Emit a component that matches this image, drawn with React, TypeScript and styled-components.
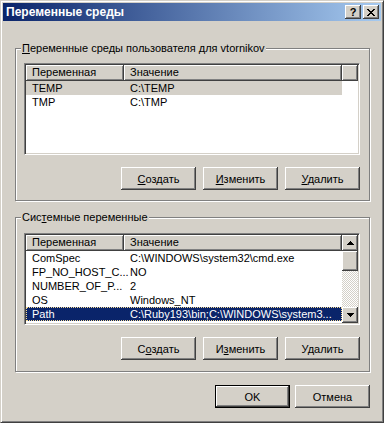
import styled, { createGlobalStyle, css } from "styled-components";

type Row = { name: string; value: string };

const GlobalStyle = createGlobalStyle`
  html, body {
    margin: 0;
    padding: 0;
    background: #d4d0c8;
  }
`;

const raised = css`
  box-shadow: inset -1px -1px #404040, inset 1px 1px #fff,
    inset -2px -2px #808080, inset 2px 2px #d4d0c8;
`;

const Window = styled.div`
  box-sizing: border-box;
  width: 384px;
  height: 423px;
  padding: 2px;
  background: #d4d0c8;
  border: 1px solid;
  border-color: #d4d0c8 #404040 #404040 #d4d0c8;
  box-shadow: inset 1px 1px #fff, inset -1px -1px #808080;
  display: flex;
  flex-direction: column;
  font-family: "Liberation Sans", Arial, sans-serif;
  font-size: 11px;
  color: #000;
`;

const TitleBar = styled.div`
  flex: none;
  height: 18px;
  display: flex;
  align-items: center;
  padding: 0 2px 0 3px;
  background: linear-gradient(to right, #0a246a, #a6caf0);
  color: #fff;
`;

const Title = styled.div`
  flex: 1;
  font-weight: bold;
  font-size: 12px;
`;

const CaptionButton = styled.div<{ $gap?: number }>`
  width: 16px;
  height: 14px;
  margin-left: ${(p) => p.$gap ?? 0}px;
  background: #d4d0c8;
  ${raised}
  display: flex;
  align-items: center;
  justify-content: center;
  color: #000;
  font-weight: bold;
  font-size: 11px;
  line-height: 14px;
`;

const Client = styled.div`
  flex: 1;
  display: flex;
  flex-direction: column;
  padding: 21px 11px 0 12px;
`;

const Group = styled.fieldset<{ $top?: number }>`
  margin: ${(p) => p.$top ?? 0}px 0 0 0;
  padding: 0;
  min-width: 0;
  border: 1px solid #808080;
  box-shadow: inset 1px 1px #fff, 1px 1px #fff;
`;

const Legend = styled.legend`
  margin-left: 5px;
  padding: 0 1px;
  line-height: 13px;
  background: #d4d0c8;
`;

const GroupBody = styled.div<{ $pt: number; $pb: number }>`
  display: flex;
  flex-direction: column;
  padding: ${(p) => p.$pt}px 9px ${(p) => p.$pb}px 8px;
`;

const ListView = styled.div`
  box-sizing: border-box;
  height: 92px;
  padding: 1px;
  display: flex;
  background: #fff;
  border: 1px solid;
  border-color: #808080 #fff #fff #808080;
  box-shadow: inset 1px 1px #404040, inset -1px -1px #d4d0c8;
`;

const Columns = styled.div`
  flex: 1;
  display: flex;
  flex-direction: column;
  overflow: hidden;
`;

const Header = styled.div`
  display: flex;
  flex: none;
  height: 16px;
`;

const HeaderCell = styled.div<{ $w?: number }>`
  box-sizing: border-box;
  ${(p) => (p.$w ? `width: ${p.$w}px; flex: none;` : "flex: 1;")}
  height: 16px;
  padding-left: 6px;
  line-height: 15px;
  background: #d4d0c8;
  ${raised}
`;

const ItemRow = styled.div<{ $sel?: "gray" | "blue" }>`
  display: flex;
  width: 316px;
  height: 14px;
  line-height: 14px;
  background: ${(p) =>
    p.$sel === "gray" ? "#d4d0c8" : p.$sel === "blue" ? "#0a246a" : "transparent"};
  color: ${(p) => (p.$sel === "blue" ? "#fff" : "#000")};
  ${(p) =>
    p.$sel === "blue" &&
    css`
      outline: 1px dotted #f5db95;
      outline-offset: -1px;
    `}
`;

const Cell = styled.div<{ $w: number }>`
  box-sizing: border-box;
  flex: none;
  width: ${(p) => p.$w}px;
  padding-left: 6px;
  white-space: nowrap;
`;

const ScrollBar = styled.div`
  flex: none;
  width: 16px;
  display: flex;
  flex-direction: column;
  background: repeating-conic-gradient(#d4d0c8 0 25%, #fff 0 50%) 0 0 / 2px 2px;
`;

const ScrollButton = styled.div`
  flex: none;
  width: 16px;
  height: 16px;
  background: #d4d0c8;
  ${raised}
  display: flex;
  align-items: center;
  justify-content: center;
`;

const Thumb = styled.div`
  flex: none;
  width: 16px;
  height: 20px;
  background: #d4d0c8;
  ${raised}
`;

const Track = styled.div`
  flex: 1;
`;

const ButtonRow = styled.div<{ $top: number; $gap: number }>`
  display: flex;
  justify-content: flex-end;
  gap: ${(p) => p.$gap}px;
  margin-top: ${(p) => p.$top}px;
`;

const Button = styled.button<{ $default?: boolean }>`
  box-sizing: border-box;
  width: 75px;
  height: 23px;
  padding: 0;
  border: none;
  background: #d4d0c8;
  font-family: "Liberation Sans", Arial, sans-serif;
  font-size: 11px;
  color: #000;
  ${(p) =>
    p.$default
      ? css`
          box-shadow: inset 0 0 0 1px #000, inset -2px -2px #404040,
            inset 2px 2px #fff, inset -3px -3px #808080;
        `
      : raised}
`;

const Arrow = ({ down }: { down?: boolean }) => (
  <svg width="7" height="4" viewBox="0 0 7 4" shapeRendering="crispEdges">
    {[0, 1, 2, 3].map((i) => {
      const half = down ? 3 - i : i;
      return <rect key={i} x={3 - half} y={i} width={1 + 2 * half} height="1" fill="#000" />;
    })}
  </svg>
);

const CloseGlyph = () => (
  <svg width="8" height="7" viewBox="0 0 8 7" shapeRendering="crispEdges" fill="#000">
    <rect x="0" y="0" width="2" height="1" />
    <rect x="6" y="0" width="2" height="1" />
    <rect x="1" y="1" width="2" height="1" />
    <rect x="5" y="1" width="2" height="1" />
    <rect x="2" y="2" width="4" height="1" />
    <rect x="3" y="3" width="2" height="1" />
    <rect x="2" y="4" width="4" height="1" />
    <rect x="1" y="5" width="2" height="1" />
    <rect x="5" y="5" width="2" height="1" />
    <rect x="0" y="6" width="2" height="1" />
    <rect x="6" y="6" width="2" height="1" />
  </svg>
);

const userVars: Row[] = [
  { name: "TEMP", value: "C:\\TEMP" },
  { name: "TMP", value: "C:\\TMP" },
];

const systemVars: Row[] = [
  { name: "ComSpec", value: "C:\\WINDOWS\\system32\\cmd.exe" },
  { name: "FP_NO_HOST_C...", value: "NO" },
  { name: "NUMBER_OF_P...", value: "2" },
  { name: "OS", value: "Windows_NT" },
  { name: "Path", value: "C:\\Ruby193\\bin;C:\\WINDOWS\\system3..." },
];

export default function App() {
  return (
    <>
      <GlobalStyle />
      <Window>
        <TitleBar>
          <Title>Переменные среды</Title>
          <CaptionButton>?</CaptionButton>
          <CaptionButton $gap={2}>
            <CloseGlyph />
          </CaptionButton>
        </TitleBar>
        <Client>
          <Group>
            <Legend>
              <u>П</u>еременные среды пользователя для vtornikov
            </Legend>
            <GroupBody $pt={8} $pb={10}>
              <ListView>
                <Columns>
                  <Header>
                    <HeaderCell $w={98}>Переменная</HeaderCell>
                    <HeaderCell $w={218}>Значение</HeaderCell>
                    <HeaderCell />
                  </Header>
                  {userVars.map((v, i) => (
                    <ItemRow key={v.name} $sel={i === 0 ? "gray" : undefined}>
                      <Cell $w={98}>{v.name}</Cell>
                      <Cell $w={218}>{v.value}</Cell>
                    </ItemRow>
                  ))}
                </Columns>
              </ListView>
              <ButtonRow $top={12} $gap={7}>
                <Button>
                  <u>С</u>оздать
                </Button>
                <Button>
                  <u>И</u>зменить
                </Button>
                <Button>
                  <u>У</u>далить
                </Button>
              </ButtonRow>
            </GroupBody>
          </Group>
          <Group $top={10}>
            <Legend>
              Сис<u>т</u>емные переменные
            </Legend>
            <GroupBody $pt={9} $pb={11}>
              <ListView>
                <Columns>
                  <Header>
                    <HeaderCell $w={98}>Переменная</HeaderCell>
                    <HeaderCell $w={218}>Значение</HeaderCell>
                  </Header>
                  {systemVars.map((v, i) => (
                    <ItemRow key={v.name} $sel={i === systemVars.length - 1 ? "blue" : undefined}>
                      <Cell $w={98}>{v.name}</Cell>
                      <Cell $w={218}>{v.value}</Cell>
                    </ItemRow>
                  ))}
                </Columns>
                <ScrollBar>
                  <ScrollButton>
                    <Arrow />
                  </ScrollButton>
                  <Thumb />
                  <Track />
                  <ScrollButton>
                    <Arrow down />
                  </ScrollButton>
                </ScrollBar>
              </ListView>
              <ButtonRow $top={12} $gap={7}>
                <Button>
                  С<u>о</u>здать
                </Button>
                <Button>
                  И<u>з</u>менить
                </Button>
                <Button>
                  У<u>д</u>алить
                </Button>
              </ButtonRow>
            </GroupBody>
          </Group>
          <ButtonRow $top={13} $gap={5}>
            <Button $default>OK</Button>
            <Button>Отмена</Button>
          </ButtonRow>
        </Client>
      </Window>
    </>
  );
}
